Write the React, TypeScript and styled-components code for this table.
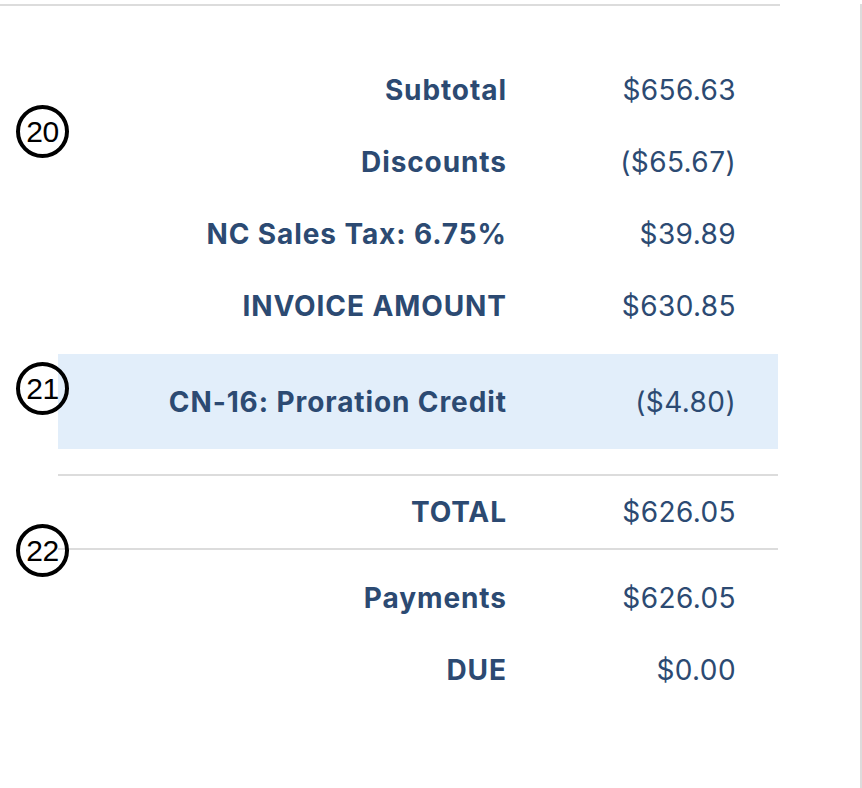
import React from "react";
import styled, { createGlobalStyle } from "styled-components";

const Global = createGlobalStyle`
  html, body { margin: 0; padding: 0; background: #ffffff; }
  body { font-family: Inter, "Noto Sans", sans-serif; }
`;

const Page = styled.div`
  position: relative;
  width: 860px;
  height: 788px;
  border-right: 2px solid #dcdcdc;
  background: #fff;
`;

const Panel = styled.div`
  margin-top: 4px;
  width: 780px;
  border-top: 2px solid #dcdcdc;
  padding: 48px 2px 0 58px;
  box-sizing: border-box;
`;

const Row = styled.div<{ $h?: number }>`
  display: grid;
  grid-template-columns: 1fr 230px;
  align-items: center;
  height: ${(p) => p.$h ?? 72}px;
  padding-right: 42px;
  color: #2c4a72;
`;

const Label = styled.div`
  text-align: right;
  font-family: Inter, "Noto Sans", sans-serif;
  font-weight: 700;
  font-size: 28px;
  letter-spacing: 0.9px;
  margin-right: -0.9px;
`;

const Value = styled.div`
  text-align: right;
  font-family: Inter, "Noto Sans", sans-serif;
  font-weight: 400;
  font-size: 28px;
  letter-spacing: 0.4px;
`;

const Highlight = styled.div`
  margin-top: 12px;
  background: #e2eefa;
`;

const Divider = styled.div<{ $mt?: number }>`
  height: 2px;
  background: #dcdcdc;
  margin-top: ${(p) => p.$mt ?? 0}px;
`;

const Group = styled.div<{ $mt?: number }>`
  margin-top: ${(p) => p.$mt ?? 0}px;
`;

const Marker = styled.div<{ $top: number }>`
  position: absolute;
  left: 16px;
  top: ${(p) => p.$top}px;
  width: 53px;
  height: 53px;
  box-sizing: border-box;
  border: 4.5px solid #000;
  border-radius: 50%;
  display: flex;
  align-items: center;
  justify-content: center;
  font-family: "Liberation Sans", Arial, sans-serif;
  font-size: 30px;
  color: #000;
  line-height: 1;
  letter-spacing: -0.5px;
`;

const rowsA = [
  ["Subtotal", "$656.63"],
  ["Discounts", "($65.67)"],
  ["NC Sales Tax: 6.75%", "$39.89"],
  ["INVOICE AMOUNT", "$630.85"],
];

const rowsB = [
  ["Payments", "$626.05"],
  ["DUE", "$0.00"],
];

export default function App() {
  return (
    <>
      <Global />
      <Page>
        <Panel>
          {rowsA.map(([l, v]) => (
            <Row key={l}>
              <Label>{l}</Label>
              <Value>{v}</Value>
            </Row>
          ))}
          <Highlight>
            <Row $h={95}>
              <Label>CN-16: Proration Credit</Label>
              <Value>($4.80)</Value>
            </Row>
          </Highlight>
          <Divider $mt={25} />
          <Row>
            <Label>TOTAL</Label>
            <Value>$626.05</Value>
          </Row>
          <Divider />
          <Group $mt={12}>
            {rowsB.map(([l, v]) => (
              <Row key={l}>
                <Label>{l}</Label>
                <Value>{v}</Value>
              </Row>
            ))}
          </Group>
        </Panel>
        <Marker $top={101}>20</Marker>
        <Marker $top={358}>21</Marker>
        <Marker $top={520}>22</Marker>
      </Page>
    </>
  );
}
